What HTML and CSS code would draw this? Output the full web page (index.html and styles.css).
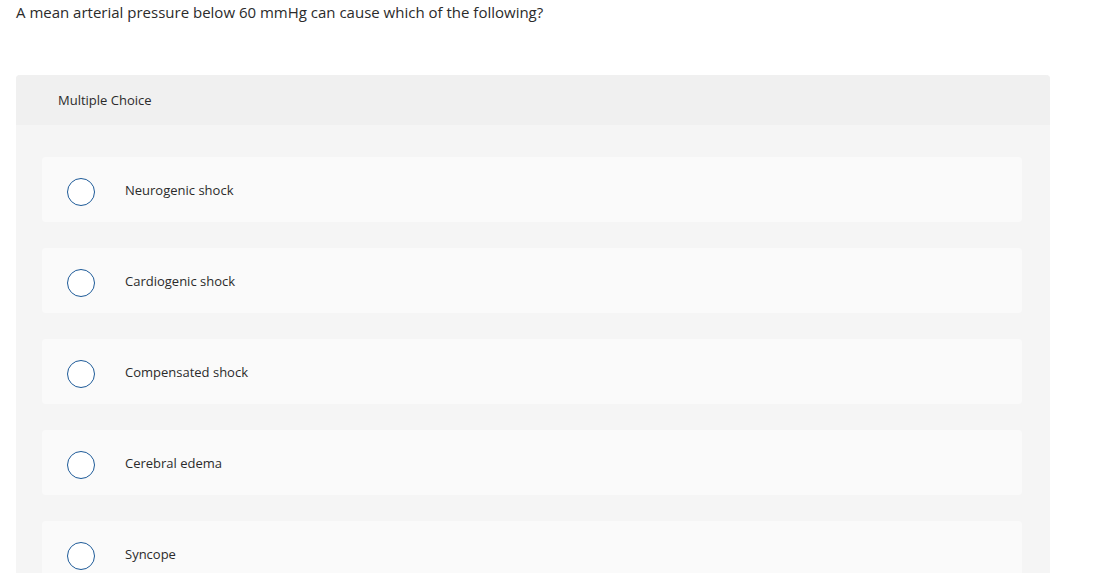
FILE: index.html
```html
<!DOCTYPE html>
<html>
<head>
<meta charset="utf-8">
<link rel="stylesheet" href="styles.css">
</head>
<body>
<div class="page">
  <p class="question">A mean arterial pressure below 60 mmHg can cause which of the following?</p>
  <div class="panel">
    <div class="panel-head">Multiple Choice</div>
    <div class="panel-body">
      <div class="option"><span class="radio"></span><span class="label">Neurogenic shock</span></div>
      <div class="option"><span class="radio"></span><span class="label">Cardiogenic shock</span></div>
      <div class="option"><span class="radio"></span><span class="label">Compensated shock</span></div>
      <div class="option"><span class="radio"></span><span class="label">Cerebral edema</span></div>
      <div class="option"><span class="radio"></span><span class="label">Syncope</span></div>
    </div>
  </div>
</div>
</body>
</html>
```

FILE: styles.css
```css
html, body {
  margin: 0;
  padding: 0;
  background: #ffffff;
}
body {
  font-family: "Open Sans", "Liberation Sans", sans-serif;
  color: #333333;
}
.page {
  padding: 0 64px 0 16px;
}
.question {
  margin: 0;
  padding-top: 2px;
  padding-bottom: 1px;
  font-size: 15px;
  line-height: 20px;
  color: #2b2b2b;
}
.panel {
  margin-top: 52px;
  height: 498px;
  overflow: hidden;
  border-radius: 4px 4px 0 0;
  background: #f5f5f5;
}
.panel-head {
  height: 50px;
  background: #f0f0f0;
  display: flex;
  align-items: center;
  padding-left: 42px;
  font-size: 13px;
  color: #2b2b2b;
}
.panel-body {
  padding: 32px 28px 0 26px;
  display: flex;
  flex-direction: column;
  gap: 26px;
}
.option {
  height: 65px;
  flex: none;
  background: #fafafa;
  border-radius: 4px;
  display: flex;
  align-items: center;
  padding-left: 25px;
  box-sizing: border-box;
}
.radio {
  width: 28px;
  height: 28px;
  box-sizing: border-box;
  border: 1.5px solid #1d5a98;
  border-radius: 50%;
  background: #ffffff;
  margin-top: 5px;
  flex: none;
}
.label {
  margin-left: 30px;
  font-size: 13px;
  color: #2b2b2b;
}
```
